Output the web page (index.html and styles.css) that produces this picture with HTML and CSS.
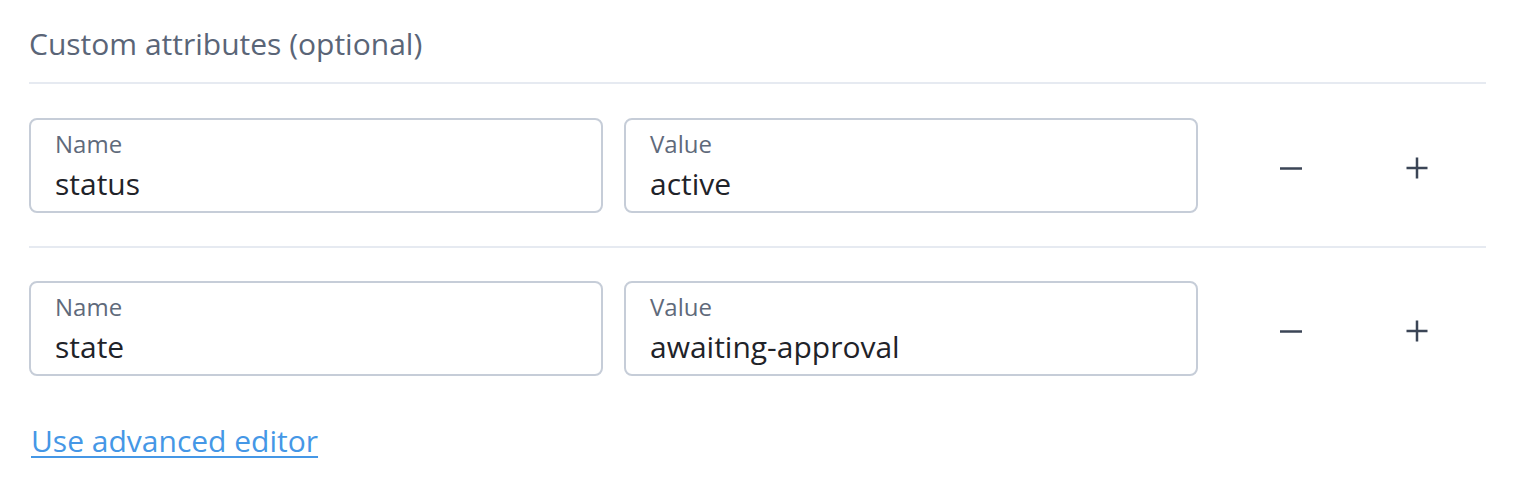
FILE: index.html
```html
<!DOCTYPE html>
<html lang="en">
<head>
<meta charset="utf-8">
<title>Custom attributes</title>
<link rel="stylesheet" href="styles.css">
</head>
<body>
<section class="attrs">
  <h2 class="attrs-title">Custom attributes (optional)</h2>
  <div class="attr-row">
    <label class="field">
      <span class="field-label">Name</span>
      <span class="field-value">status</span>
    </label>
    <label class="field">
      <span class="field-label">Value</span>
      <span class="field-value">active</span>
    </label>
    <div class="actions">
      <button class="icon-btn" aria-label="Remove">
        <svg width="24" height="24" viewBox="0 0 24 24"><path d="M1 12.5H23" stroke="#3b4556" stroke-width="2.5"/></svg>
      </button>
      <button class="icon-btn" aria-label="Add">
        <svg width="24" height="24" viewBox="0 0 24 24"><path d="M1.5 12H22.5M12 1.5V22.5" stroke="#3b4556" stroke-width="2.5"/></svg>
      </button>
    </div>
  </div>
  <div class="attr-row">
    <label class="field">
      <span class="field-label">Name</span>
      <span class="field-value">state</span>
    </label>
    <label class="field">
      <span class="field-label">Value</span>
      <span class="field-value">awaiting-approval</span>
    </label>
    <div class="actions">
      <button class="icon-btn" aria-label="Remove">
        <svg width="24" height="24" viewBox="0 0 24 24"><path d="M1 12.5H23" stroke="#3b4556" stroke-width="2.5"/></svg>
      </button>
      <button class="icon-btn" aria-label="Add">
        <svg width="24" height="24" viewBox="0 0 24 24"><path d="M1.5 12H22.5M12 1.5V22.5" stroke="#3b4556" stroke-width="2.5"/></svg>
      </button>
    </div>
  </div>
  <a class="advanced-link" href="#">Use advanced editor</a>
</section>
</body>
</html>
```
FILE: styles.css
```css
html, body {
  margin: 0;
  padding: 0;
  background: #ffffff;
}

body {
  font-family: "Open Sans", "Noto Sans", sans-serif;
}

.attrs {
  padding: 24px 32px 0 29px;
  display: flex;
  flex-direction: column;
  align-items: flex-start;
}

.attrs-title {
  margin: 0 0 18px 0;
  font-size: 30px;
  line-height: 40px;
  font-weight: 400;
  color: #5a6577;
}

.attr-row {
  align-self: stretch;
  display: flex;
  align-items: center;
  gap: 21px;
  border-top: 2px solid #e6eaf1;
  padding: 34px 0 33px 0;
}

.attr-row + .attr-row {
  padding-top: 33px;
}

.field {
  width: 574px;
  box-sizing: border-box;
  border: 2px solid #c6cdd8;
  border-radius: 8px;
  padding: 9px 24px 8px 24px;
  display: flex;
  flex-direction: column;
}

.field-label {
  font-size: 24px;
  line-height: 30px;
  color: #5f6a7b;
}

.field-value {
  margin-top: 6px;
  font-size: 30px;
  line-height: 38px;
  color: #1f2329;
}

.actions {
  display: flex;
  align-items: center;
  padding-top: 4px;
  padding-left: 60px;
  gap: 102px;
}

.icon-btn {
  width: 24px;
  height: 24px;
  padding: 0;
  border: 0;
  background: transparent;
  display: flex;
  align-items: center;
  justify-content: center;
}

.icon-btn svg {
  display: block;
}

.advanced-link {
  margin-top: 12px;
  margin-left: 2px;
  font-size: 30px;
  line-height: 40px;
  color: #4597e6;
  text-decoration: underline;
  text-decoration-thickness: 2px;
  text-underline-offset: 4px;
}
```
